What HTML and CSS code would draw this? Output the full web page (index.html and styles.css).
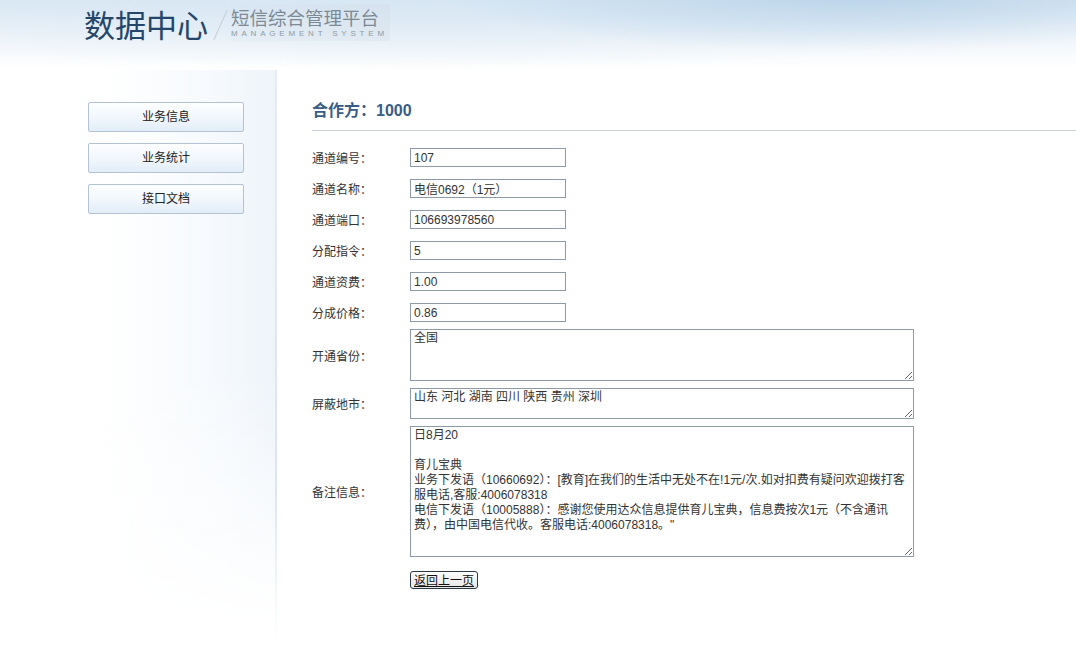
FILE: index.html
```html
<!DOCTYPE html>
<html lang="zh-CN">
<head>
<meta charset="UTF-8">
<title>数据中心 - 短信综合管理平台</title>
<link rel="stylesheet" href="styles.css">
</head>
<body>
    <div class="header">
        <div class="logo">
            <span class="logo-main">数据中心</span>
            <span class="logo-slash"></span>
            <div class="logo-sub">
                <span class="logo-cn">短信综合管理平台</span>
                <span class="logo-en">MANAGEMENT SYSTEM</span>
            </div>
        </div>
    </div>

    <div class="wrap">
        <div class="sidebar">
            <a class="side-btn" href="#">业务信息</a>
            <a class="side-btn" href="#">业务统计</a>
            <a class="side-btn" href="#">接口文档</a>
        </div>

        <div class="main">
            <h2 class="title">合作方：1000</h2>
            <div class="form">
                <div class="row">
                    <label>通道编号：</label>
                    <input type="text" class="txt" value="107">
                </div>
                <div class="row">
                    <label>通道名称：</label>
                    <input type="text" class="txt" value="电信0692（1元）">
                </div>
                <div class="row">
                    <label>通道端口：</label>
                    <input type="text" class="txt" value="106693978560">
                </div>
                <div class="row">
                    <label>分配指令：</label>
                    <input type="text" class="txt" value="5">
                </div>
                <div class="row">
                    <label>通道资费：</label>
                    <input type="text" class="txt" value="1.00">
                </div>
                <div class="row">
                    <label>分成价格：</label>
                    <input type="text" class="txt" value="0.86">
                </div>
                <div class="row row-area">
                    <label>开通省份：</label>
                    <textarea class="area area-lg">全国</textarea>
                </div>
                <div class="row row-area">
                    <label>屏蔽地市：</label>
                    <textarea class="area area-sm">山东 河北 湖南 四川 陕西 贵州 深圳</textarea>
                </div>
                <div class="row row-area">
                    <label>备注信息：</label>
                    <textarea class="area area-xl">日8月20

育儿宝典
业务下发语（10660692）：[教育]在我们的生活中无处不在!1元/次.如对扣费有疑问欢迎拨打客服电话,客服:4006078318
电信下发语（10005888）：感谢您使用达众信息提供育儿宝典，信息费按次1元（不含通讯费），由中国电信代收。客服电话:4006078318。"</textarea>
                </div>
                <div class="actions">
                    <button type="button" class="back-btn">返回上一页</button>
                </div>
            </div>
        </div>
    </div>
</body>
</html>
```

FILE: styles.css
```css
html, body {
    margin: 0;
    padding: 0;
    background: #fff;
}
body {
    font-family: "Liberation Sans", "Noto Sans CJK SC", sans-serif;
    font-size: 12px;
    color: #333;
    height: 671px;
    overflow: hidden;
}

.header {
    height: 70px;
    background:
        radial-gradient(ellipse 420px 60px at 860px -8px, rgba(180, 208, 232, 0.85), rgba(200, 222, 240, 0) 100%),
        radial-gradient(ellipse 700px 80px at 420px -10px, rgba(214, 230, 243, 0.9), rgba(230, 240, 248, 0) 100%),
        linear-gradient(to bottom, #dce9f4 0%, #edf3f9 45%, #fff 100%);
}
.logo {
    display: flex;
    align-items: flex-start;
    padding: 4px 0 0 84px;
}
.logo-main {
    font-family: "Noto Sans CJK SC", sans-serif;
    font-size: 31px;
    line-height: 40px;
    color: #24466a;
}
.logo-slash {
    width: 1px;
    height: 30px;
    margin: 6px 10px 0 12px;
    background: #c3ccd5;
    transform: skewX(-24deg);
}
.logo-sub {
    display: flex;
    flex-direction: column;
    padding: 2px 2px 2px 0;
    background: linear-gradient(to right, rgba(215, 224, 232, 0.15), rgba(210, 220, 228, 0.35));
}
.logo-cn {
    font-family: "Noto Sans CJK SC", sans-serif;
    font-size: 18.5px;
    line-height: 23px;
    color: #7d8a96;
}
.logo-en {
    font-size: 8px;
    line-height: 10px;
    letter-spacing: 3.8px;
    color: #8f9aa4;
}

.wrap {
    display: flex;
    height: 601px;
}
.sidebar {
    width: 277px;
    flex: none;
    box-sizing: border-box;
    padding: 32px 0 0 88px;
    display: flex;
    flex-direction: column;
    gap: 11px;
    border-right: 2px solid #e3e9ef;
    border-image: linear-gradient(to bottom, #e6ecf2 0%, #dde5ec 70%, #fff 95%) 1;
    background:
        linear-gradient(to bottom, rgba(255, 255, 255, 0) 50%, #fff 92%),
        linear-gradient(to right, #fff 38%, #f5f9fd 80%, #eef4fa 100%);
}
.side-btn {
    display: block;
    width: 156px;
    height: 30px;
    box-sizing: border-box;
    line-height: 28px;
    text-align: center;
    text-decoration: none;
    color: #222;
    font-size: 12px;
    border: 1px solid #b4c3d1;
    border-radius: 2px;
    background: linear-gradient(to bottom, #fdfeff 0%, #f2f7fc 50%, #e2edf8 100%);
}

.main {
    flex: 1;
    padding: 31px 0 0 35px;
}
.title {
    margin: 0;
    padding: 0 0 9px;
    font-size: 16px;
    line-height: 20px;
    font-weight: bold;
    color: #395d86;
    border-bottom: 1px solid #c8d1d9;
}
.form {
    padding-top: 11px;
}
.row {
    display: flex;
    align-items: center;
    height: 31px;
}
.row label {
    width: 98px;
    flex: none;
    color: #333;
}
.txt {
    width: 156px;
    height: 19px;
    box-sizing: border-box;
    margin: 0;
    padding: 0 3px;
    border: 1px solid #8e9aa6;
    font-family: "Liberation Sans", "Noto Sans CJK SC", sans-serif;
    font-size: 12px;
    color: #333;
    background: #fff;
}
.row-area {
    height: auto;
    padding: 1px 0 4px;
}
.row-area + .row-area {
    padding-top: 3px;
}
.area {
    width: 504px;
    box-sizing: border-box;
    margin: 0;
    padding: 1px 3px;
    border: 1px solid #8e9aa6;
    font-family: "Liberation Sans", "Noto Sans CJK SC", sans-serif;
    font-size: 12px;
    line-height: 15px;
    color: #333;
    background: #fff;
    resize: both;
    overflow: hidden;
}
.area-lg { height: 52px; }
.area-sm { height: 31px; }
.area-xl { height: 131px; }

.actions {
    padding: 10px 0 0 98px;
}
.back-btn {
    height: 18px;
    padding: 0 3px;
    font-family: "Noto Sans CJK SC", sans-serif;
    font-size: 12px;
    line-height: 14px;
    color: #111;
    text-decoration: underline;
    border: 1px solid #2c3a48;
    border-radius: 3px;
    background: linear-gradient(to bottom, #fdfdfd, #e6e6e6);
}
```
